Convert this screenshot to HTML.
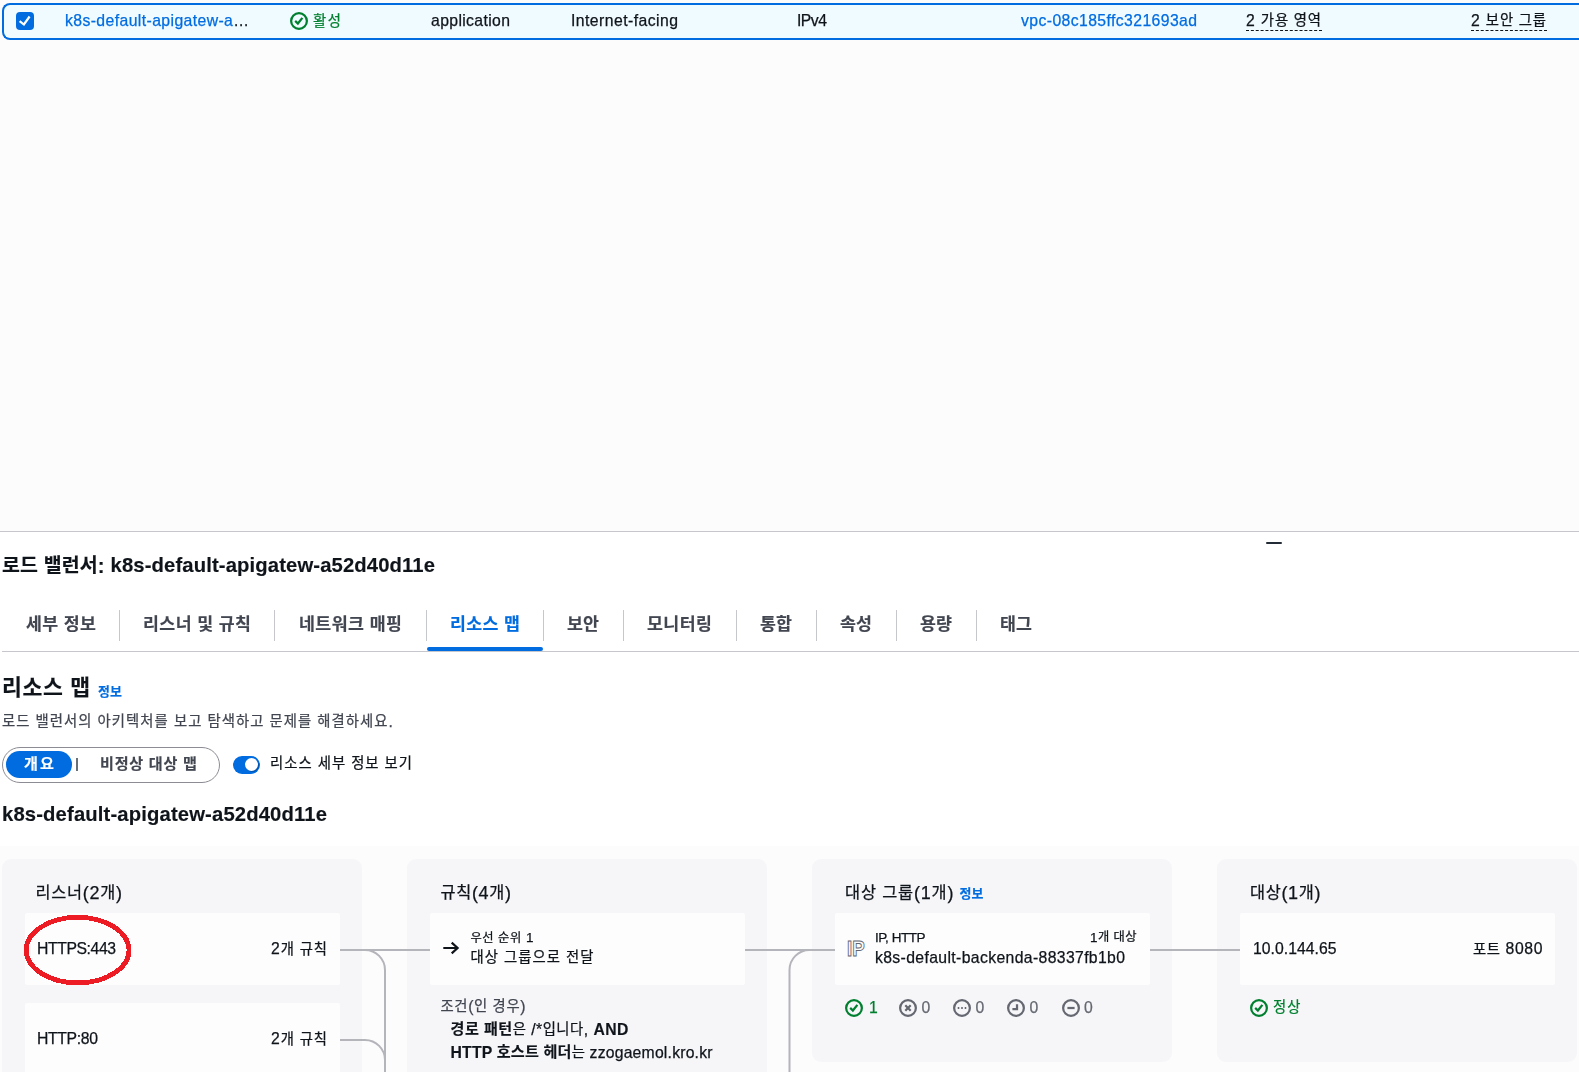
<!DOCTYPE html>
<html lang="ko">
<head>
<meta charset="utf-8">
<title>로드 밸런서 - 리소스 맵</title>
<style>
html,body{margin:0;padding:0;}
html{width:1579px;height:1072px;overflow:hidden;}
body{width:1579px;height:1072px;overflow:hidden;position:relative;background:#fcfcfc;font-family:"Liberation Sans","Noto Sans CJK KR",sans-serif;color:#0f141a;}
.abs{position:absolute;}
.t{position:absolute;white-space:nowrap;line-height:24px;height:24px;-webkit-text-stroke:0.25px currentColor;}
.t.bk,.t b{-webkit-text-stroke:0.15px currentColor;}
.t b{font-weight:700;}
.k{font-size:.91em;position:relative;top:-.06em;}
.t b .k,.bk .k{font-size:.96em;}
#row{left:2px;top:3px;width:1575px;height:33px;border:2px solid #006ce0;border-right:0;border-radius:8px 0 0 8px;background:#f0fbff;}
#cb{left:16px;top:12px;width:18px;height:18px;border-radius:4px;background:#006ce0;}
#panel{left:0;top:531px;width:1579px;height:540px;background:#fff;border-top:1px solid #c6c6cd;}
#mapbg{left:0;top:846px;width:1579px;height:226px;background:#fcfcfc;}
.col{position:absolute;top:859px;width:360px;background:#f6f6f9;border-radius:9px;}
.card{position:absolute;background:#fdfdfd;border-radius:2px;}
.sep{position:absolute;top:610px;height:31px;width:1px;background:#c6c6cd;}
svg{position:absolute;overflow:visible;}
#txt{position:absolute;left:0;top:0;width:1579px;height:1072px;will-change:transform;}
</style>
</head>
<body>
<div class="abs" id="row"></div>
<div class="abs" id="cb"></div>
<svg style="left:16px;top:12px" width="18" height="18" viewBox="0 0 18 18"><path d="M3.6 9.1 L7.9 12.5 L13.6 4.5" fill="none" stroke="#fff" stroke-width="2.2" stroke-linejoin="miter"/></svg>
<svg style="left:290px;top:12px" width="18" height="18" viewBox="0 0 16 16" fill="none" stroke="#00802f" stroke-width="2"><circle cx="8" cy="8" r="7"/><path d="M4.6 7.9 L7 10.2 L11 5.2"/></svg>

<div class="abs" id="panel"></div>
<div class="abs" style="left:1266px;top:542px;width:16px;height:2px;background:#232b37;border-radius:1px"></div>

<!-- tabs -->
<div class="abs" style="left:2px;top:651px;width:1577px;height:1px;background:#c6c6cd"></div>
<div class="sep" style="left:119px"></div><div class="sep" style="left:274px"></div><div class="sep" style="left:425.5px"></div><div class="sep" style="left:543px"></div><div class="sep" style="left:623px"></div><div class="sep" style="left:736px"></div><div class="sep" style="left:816px"></div><div class="sep" style="left:896px"></div><div class="sep" style="left:975.5px"></div>
<div class="abs" style="left:427px;top:646.5px;width:116px;height:4.5px;background:#006ce0;border-radius:3px"></div>

<!-- segmented control -->
<div class="abs" style="left:2px;top:747px;width:216px;height:34px;border:1px solid #8c8c94;border-radius:18px;background:#fff"></div>
<div class="abs" style="left:6px;top:751px;width:66px;height:27px;border-radius:14px;background:#006ce0"></div>
<div class="abs" style="left:76.3px;top:758.3px;width:1.5px;height:12.5px;background:#687078"></div>
<!-- toggle -->
<div class="abs" style="left:233px;top:755.5px;width:27px;height:18px;border-radius:9px;background:#006ce0"></div>
<div class="abs" style="left:244.5px;top:757.75px;width:13.5px;height:13.5px;border-radius:7px;background:#fff;box-shadow:1px 1px 0 rgba(0,7,22,.25)"></div>

<!-- map -->
<div class="abs" id="mapbg"></div>
<div class="col" style="left:2px;height:213px;border-radius:9px 9px 0 0"></div>
<div class="col" style="left:407px;height:213px;border-radius:9px 9px 0 0"></div>
<div class="col" style="left:812px;height:203px"></div>
<div class="col" style="left:1217px;height:203px"></div>
<div class="card" style="left:25px;top:913px;width:315px;height:72px"></div>
<div class="card" style="left:25px;top:1003px;width:315px;height:69px;border-radius:2px 2px 0 0"></div>
<div class="card" style="left:430px;top:913px;width:315px;height:72px"></div>
<div class="card" style="left:835px;top:913px;width:315px;height:72px"></div>
<div class="card" style="left:1240px;top:913px;width:315px;height:72px"></div>

<!-- connectors -->
<svg style="left:0;top:0" width="1579" height="1072" viewBox="0 0 1579 1072" fill="none" stroke="#b4b4bb" stroke-width="2">
<path d="M340 950 H430"/>
<path d="M340 950 H365 A20 20 0 0 1 385 970 V1072"/>
<path d="M340 1040 H365 A20 20 0 0 1 385 1060 V1072"/>
<path d="M745 950 H835"/>
<path d="M789.5 1072 V970 A20 20 0 0 1 809.5 950"/>
<path d="M1150 950 H1240"/>
<ellipse cx="77.6" cy="950.1" rx="51.4" ry="32.8" stroke="#ed1c24" stroke-width="4.8" shape-rendering="crispEdges"/>
</svg>

<!-- icons -->
<svg style="left:443px;top:939px" width="18" height="18" viewBox="0 0 18 18" fill="none" stroke="#0f141a" stroke-width="2.2"><path d="M0.3 9 H14.2 M8.7 3.6 L14.6 9 L8.7 14.4" stroke-linejoin="miter"/></svg>
<!-- IP icon (outlined text) -->
<svg style="left:845px;top:936px" width="24" height="24" viewBox="0 0 24 24"><text x="2" y="20" font-family="Liberation Sans, sans-serif" font-weight="700" font-size="22.4" fill="#fcfcfc" stroke="#5f6470" stroke-width="1" textLength="17.6" lengthAdjust="spacingAndGlyphs">IP</text></svg>
<!-- status icons -->
<svg style="left:845px;top:999px" width="18" height="18" viewBox="0 0 16 16" fill="none" stroke="#00802f" stroke-width="2"><circle cx="8" cy="8" r="7"/><path d="M4.6 7.9 L7 10.2 L11 5.2"/></svg>
<svg style="left:899px;top:999px" width="18" height="18" viewBox="0 0 16 16" fill="none" stroke="#656871" stroke-width="2"><circle cx="8" cy="8" r="7"/><path d="M5.6 5.6 L10.4 10.4 M10.4 5.6 L5.6 10.4"/></svg>
<svg style="left:953px;top:999px" width="18" height="18" viewBox="0 0 16 16" fill="none" stroke="#656871" stroke-width="2"><circle cx="8" cy="8" r="7"/><path d="M4.2 8 H5.6 M7.3 8 H8.7 M10.4 8 H11.8" stroke-width="1.9"/></svg>
<svg style="left:1007px;top:999px" width="18" height="18" viewBox="0 0 16 16" fill="none" stroke="#656871" stroke-width="2"><circle cx="8" cy="8" r="7"/><path d="M8.9 4.6 V8.9 H4.8"/></svg>
<svg style="left:1061.5px;top:999px" width="18" height="18" viewBox="0 0 16 16" fill="none" stroke="#656871" stroke-width="2"><circle cx="8" cy="8" r="7"/><path d="M4.8 8 H11.2"/></svg>
<svg style="left:1250px;top:998.7px" width="18" height="18" viewBox="0 0 16 16" fill="none" stroke="#00802f" stroke-width="2"><circle cx="8" cy="8" r="7"/><path d="M4.6 7.9 L7 10.2 L11 5.2"/></svg>

<div id="txt">
<span class="t" id="r_name" style="left:65px;top:8.90px;font-size:15.75px;font-weight:400;color:#006ce0;letter-spacing:0.405px;">k8s-default-apigatew-a<span style="color:#0f141a">…</span></span>
<span class="t" id="r_stat" style="left:313px;top:9.40px;font-size:15.75px;font-weight:400;color:#00802f;letter-spacing:1.625px;"><span class="k">활성</span></span>
<span class="t" id="r_type" style="left:431px;top:8.90px;font-size:15.75px;font-weight:400;color:#0f141a;letter-spacing:0.369px;">application</span>
<span class="t" id="r_scheme" style="left:571px;top:8.90px;font-size:15.75px;font-weight:400;color:#0f141a;letter-spacing:0.451px;">Internet-facing</span>
<span class="t" id="r_ip" style="left:797px;top:8.90px;font-size:15.75px;font-weight:400;color:#0f141a;letter-spacing:-0.505px;">IPv4</span>
<span class="t" id="r_vpc" style="left:1021px;top:8.90px;font-size:15.75px;font-weight:400;color:#006ce0;letter-spacing:0.408px;">vpc-08c185ffc321693ad</span>
<span class="t" id="r_az" style="left:1246px;top:8.90px;font-size:15.75px;font-weight:400;color:#0f141a;letter-spacing:0.857px;border-bottom:1px dashed #0f141a;height:21.5px;">2 <span class="k">가용 영역</span></span>
<span class="t" id="r_sg" style="left:1471px;top:8.90px;font-size:15.75px;font-weight:400;color:#0f141a;letter-spacing:0.857px;border-bottom:1px dashed #0f141a;height:21.5px;">2 <span class="k">보안 그룹</span></span>
<span class="t bk" id="h_lb" style="left:2px;top:553.90px;font-size:20.25px;font-weight:700;color:#0f141a;letter-spacing:0.154px;"><span class="k">로드 밸런서</span>:</span>
<span class="t bk" id="h_lb2" style="left:110.5px;top:553.20px;font-size:20.25px;font-weight:700;color:#0f141a;letter-spacing:0.124px;">k8s-default-apigatew-a52d40d11e</span>
<span class="t bk" id="tab0" style="left:26px;top:613.40px;font-size:18px;font-weight:700;color:#424650;letter-spacing:0.414px;"><span class="k">세부 정보</span></span>
<span class="t bk" id="tab1" style="left:143px;top:613.40px;font-size:18px;font-weight:700;color:#424650;letter-spacing:0.442px;"><span class="k">리스너 및 규칙</span></span>
<span class="t bk" id="tab2" style="left:299px;top:613.40px;font-size:18px;font-weight:700;color:#424650;letter-spacing:0.482px;"><span class="k">네트워크 매핑</span></span>
<span class="t bk" id="tab3" style="left:450px;top:613.40px;font-size:18px;font-weight:700;color:#006ce0;letter-spacing:0.414px;"><span class="k">리소스 맵</span></span>
<span class="t bk" id="tab4" style="left:567px;top:613.40px;font-size:18px;font-weight:700;color:#424650;letter-spacing:0.219px;"><span class="k">보안</span></span>
<span class="t bk" id="tab5" style="left:647px;top:613.40px;font-size:18px;font-weight:700;color:#424650;letter-spacing:0.484px;"><span class="k">모니터링</span></span>
<span class="t bk" id="tab6" style="left:760px;top:613.40px;font-size:18px;font-weight:700;color:#424650;letter-spacing:0.219px;"><span class="k">통합</span></span>
<span class="t bk" id="tab7" style="left:840px;top:613.40px;font-size:18px;font-weight:700;color:#424650;letter-spacing:0.219px;"><span class="k">속성</span></span>
<span class="t bk" id="tab8" style="left:920px;top:613.40px;font-size:18px;font-weight:700;color:#424650;letter-spacing:0.219px;"><span class="k">용량</span></span>
<span class="t bk" id="tab9" style="left:1000px;top:613.40px;font-size:18px;font-weight:700;color:#424650;letter-spacing:0.219px;"><span class="k">태그</span></span>
<span class="t bk" id="h_map" style="left:2px;top:677.40px;font-size:22.5px;font-weight:700;color:#0f141a;letter-spacing:0.633px;"><span class="k">리소스 맵</span></span>
<span class="t bk" id="h_info" style="left:98px;top:680.50px;font-size:13.5px;font-weight:700;color:#006ce0;letter-spacing:0.156px;"><span class="k">정보</span></span>
<span class="t" id="desc" style="left:2px;top:710.20px;font-size:15.75px;font-weight:400;color:#424650;letter-spacing:1.070px;"><span class="k">로드 밸런서의 아키텍처를 보고 탐색하고 문제를 해결하세요</span>.</span>
<span class="t bk" id="seg1" style="left:24px;top:752.50px;font-size:15.75px;font-weight:700;color:#fff;letter-spacing:2.188px;"><span class="k">개요</span></span>
<span class="t bk" id="seg2" style="left:100px;top:752.80px;font-size:15.75px;font-weight:700;color:#424650;letter-spacing:0.741px;"><span class="k">비정상 대상 맵</span></span>
<span class="t" id="tog" style="left:270px;top:752.30px;font-size:15.75px;font-weight:400;color:#0f141a;letter-spacing:1.037px;"><span class="k">리소스 세부 정보 보기</span></span>
<span class="t bk" id="h_name" style="left:2px;top:801.80px;font-size:20.25px;font-weight:700;color:#0f141a;letter-spacing:0.141px;">k8s-default-apigatew-a52d40d11e</span>
<span class="t" id="c1_t" style="left:35.5px;top:881.40px;font-size:18px;font-weight:400;color:#0f141a;letter-spacing:0.711px;"><span class="k">리스너</span>(2<span class="k">개</span>)</span>
<span class="t" id="c1_a" style="left:37px;top:937.10px;font-size:15.75px;font-weight:400;color:#0f141a;letter-spacing:-0.410px;">HTTPS:443</span>
<span class="t" id="c1_ar" style="left:271px;top:937.40px;font-size:15.75px;font-weight:400;color:#0f141a;letter-spacing:0.926px;">2<span class="k">개 규칙</span></span>
<span class="t" id="c1_b" style="left:37px;top:1027.40px;font-size:15.75px;font-weight:400;color:#0f141a;letter-spacing:-0.336px;">HTTP:80</span>
<span class="t" id="c1_br" style="left:271px;top:1027.40px;font-size:15.75px;font-weight:400;color:#0f141a;letter-spacing:0.926px;">2<span class="k">개 규칙</span></span>
<span class="t" id="c2_t" style="left:440.5px;top:881.40px;font-size:18px;font-weight:400;color:#0f141a;letter-spacing:0.662px;"><span class="k">규칙</span>(4<span class="k">개</span>)</span>
<span class="t" id="c2_p" style="left:470.5px;top:926.40px;font-size:13.5px;font-weight:400;color:#0f141a;letter-spacing:0.531px;"><span class="k">우선 순위</span> 1</span>
<span class="t" id="c2_f" style="left:470.5px;top:945.90px;font-size:15.75px;font-weight:400;color:#0f141a;letter-spacing:1.064px;"><span class="k">대상 그룹으로 전달</span></span>
<span class="t" id="c2_c" style="left:440.5px;top:994.90px;font-size:15.75px;font-weight:400;color:#424650;letter-spacing:0.656px;"><span class="k">조건</span>(<span class="k">인 경우</span>)</span>
<span class="t" id="c2_l1" style="left:450.5px;top:1017.90px;font-size:15.75px;font-weight:400;color:#0f141a;letter-spacing:0.479px;"><b><span class="k">경로 패턴</span></b><span class="k">은</span> /*<span class="k">입니다</span>, <b>AND</b></span>
<span class="t" id="c2_l2" style="left:450.5px;top:1040.90px;font-size:15.75px;font-weight:400;color:#0f141a;letter-spacing:0.200px;"><b>HTTP <span class="k">호스트 헤더</span></b><span class="k">는</span> zzogaemol.kro.kr</span>
<span class="t" id="c3_t" style="left:845px;top:881.40px;font-size:18px;font-weight:400;color:#0f141a;letter-spacing:0.834px;"><span class="k">대상 그룹</span>(1<span class="k">개</span>)</span>
<span class="t bk" id="c3_i" style="left:959.5px;top:882.90px;font-size:13.5px;font-weight:700;color:#006ce0;letter-spacing:0.156px;"><span class="k">정보</span></span>
<span class="t" id="c3_p" style="left:875px;top:925.90px;font-size:13.5px;font-weight:400;color:#0f141a;letter-spacing:-0.467px;">IP, HTTP</span>
<span class="t" id="c3_n" style="left:1090px;top:925.90px;font-size:13.5px;font-weight:400;color:#0f141a;letter-spacing:0.430px;">1<span class="k">개 대상</span></span>
<span class="t" id="c3_g" style="left:875px;top:946.10px;font-size:15.75px;font-weight:400;color:#0f141a;letter-spacing:0.365px;">k8s-default-backenda-88337fb1b0</span>
<span class="t" id="c3_s0" style="left:869px;top:995.90px;font-size:15.75px;font-weight:400;color:#00802f;letter-spacing:0.234px;">1</span>
<span class="t" id="c3_s1" style="left:921.5px;top:995.90px;font-size:15.75px;font-weight:400;color:#656871;letter-spacing:0.234px;">0</span>
<span class="t" id="c3_s2" style="left:975.5px;top:995.90px;font-size:15.75px;font-weight:400;color:#656871;letter-spacing:0.234px;">0</span>
<span class="t" id="c3_s3" style="left:1029.5px;top:995.90px;font-size:15.75px;font-weight:400;color:#656871;letter-spacing:0.234px;">0</span>
<span class="t" id="c3_s4" style="left:1084px;top:995.90px;font-size:15.75px;font-weight:400;color:#656871;letter-spacing:0.234px;">0</span>
<span class="t" id="c4_t" style="left:1250px;top:881.40px;font-size:18px;font-weight:400;color:#0f141a;letter-spacing:0.662px;"><span class="k">대상</span>(1<span class="k">개</span>)</span>
<span class="t" id="c4_ip" style="left:1253px;top:937.40px;font-size:15.75px;font-weight:400;color:#0f141a;letter-spacing:0.030px;">10.0.144.65</span>
<span class="t" id="c4_port" style="left:1473px;top:937.40px;font-size:15.75px;font-weight:400;color:#0f141a;letter-spacing:0.617px;"><span class="k">포트</span> 8080</span>
<span class="t" id="c4_ok" style="left:1273px;top:995.40px;font-size:15.75px;font-weight:400;color:#00802f;letter-spacing:1.125px;"><span class="k">정상</span></span>
</div>
</body>
</html>
